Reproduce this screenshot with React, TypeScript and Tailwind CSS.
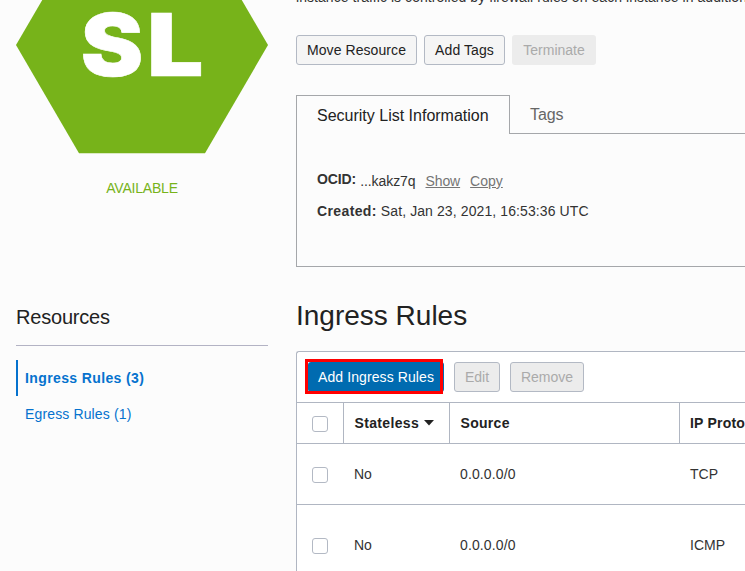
import React from 'react';

const rules = [
  { stateless: 'No', source: '0.0.0.0/0', protocol: 'TCP', height: 'h-[61px]' },
  { stateless: 'No', source: '0.0.0.0/0', protocol: 'ICMP', height: 'h-[81px]' },
];

function Checkbox() {
  return <span className="block size-4 rounded-[3px] border border-[#b3b9c4] bg-white" />;
}

function Sidebar() {
  return (
    <aside className="w-[252px] shrink-0">
      <svg className="block" width="252" height="154" viewBox="0 0 252 154">
        <polygon points="0,45 63,-63 189,-63 252,45 189,153.3 63,153.3" fill="#77b31a" />
        <text x="64.7" y="75.8" fontFamily="Inter, sans-serif" fontWeight="900" fontSize="86" fill="#fff" stroke="#fff" strokeWidth="0.6" textLength="62.5" lengthAdjust="spacingAndGlyphs">S</text>
        <text x="131" y="75.8" fontFamily="Inter, sans-serif" fontWeight="900" fontSize="86" fill="#fff" stroke="#fff" strokeWidth="0.6" textLength="56.5" lengthAdjust="spacingAndGlyphs">L</text>
      </svg>
      <div className="mt-6 h-5 text-center text-sm leading-5 tracking-[-0.2px] text-[#77b31a]">AVAILABLE</div>
      <h2 className="mt-[105px] h-[43px] border-b border-[#b3b3c4] text-[20px] leading-7 tracking-[-0.2px] text-[#222]">Resources</h2>
      <nav className="mt-[14px]">
        <div className="flex h-9 items-center border-l-2 border-[#0572ce] pl-[7px] text-sm font-bold tracking-[0.38px] text-[#0572ce]">Ingress Rules (3)</div>
        <div className="flex h-9 items-center pl-[9px] text-sm tracking-[0.14px] text-[#0572ce]">Egress Rules (1)</div>
      </nav>
    </aside>
  );
}

function Details() {
  return (
    <section>
      <div className="flex">
        <div className="h-[39px] w-[214px] shrink-0 border border-b-0 border-[#a5a7aa] pl-5 pt-2 text-base leading-6 text-[#222]">Security List Information</div>
        <div className="h-[39px] grow border-b border-[#a5a7aa] pl-5 pt-2 text-base leading-6 tracking-[-0.1px] text-[#666]">Tags</div>
      </div>
      <div className="h-[133px] border-b border-l border-[#a5a7aa] pl-5 pt-[35px] text-sm leading-5 text-[#333]">
        <div className="flex">
          <b className="tracking-[-0.1px]">OCID:</b>
          <span className="ml-1 mt-0.5 tracking-[-0.08px]">...kakz7q</span>
          <span className="ml-[10px] mt-0.5 tracking-[-0.1px] text-[#757575] underline">Show</span>
          <span className="ml-[10px] mt-0.5 text-[#757575] underline">Copy</span>
        </div>
        <div className="mt-[10px]"><b className="tracking-[0.38px]">Created:</b><span className="tracking-[0.1px]"> Sat, Jan 23, 2021, 16:53:36 UTC</span></div>
      </div>
    </section>
  );
}

function RulesTable() {
  return (
    <section className="mt-5 h-[260px] rounded-tl-[3px] border-l border-t border-[#b0b6c2] bg-white">
      <div className="flex h-[51px] items-center border-b border-[#b0b6c2] pl-2 text-sm">
        <div className="relative -top-px h-[35px] w-[138px] shrink-0">
          <button className="absolute left-[3px] top-[3px] h-[30px] w-[136px] rounded-[3px] bg-[#006bb0] pt-px text-center tracking-[0.1px] text-white">Add Ingress Rules</button>
          <span className="absolute inset-0 border-[3px] border-[#f00]" />
        </div>
        <button className="ml-[11px] h-[30px] w-[46px] shrink-0 rounded-[3px] border border-[#b3b9c4] bg-[#ececec] text-[#aaa]">Edit</button>
        <button className="ml-[10px] h-[30px] w-[74px] shrink-0 rounded-[3px] border border-[#b3b9c4] bg-[#ececec] text-[#aaa]">Remove</button>
      </div>
      <div className="grid h-[41px] grid-cols-[47px_106px_230px_1fr] border-b border-[#b0b6c2] text-sm font-bold text-[#222]">
        <div className="flex items-center border-r border-[#b0b6c2] pl-[15px] pt-px"><Checkbox /></div>
        <div className="flex items-center border-r border-[#b0b6c2] pl-[10.5px] tracking-[0.35px]">
          Stateless
          <svg className="ml-[5px]" width="10" height="6" viewBox="0 0 10 6"><path d="M0 0H10L5 5.5Z" fill="#222" /></svg>
        </div>
        <div className="flex items-center border-r border-[#b0b6c2] pl-[10.5px] tracking-[0.3px]">Source</div>
        <div className="flex items-center overflow-hidden whitespace-nowrap pl-[10px] tracking-[0.2px]">IP Protocol</div>
      </div>
      {rules.map((rule) => (
        <div key={rule.protocol} className={`grid grid-cols-[47px_106px_230px_1fr] items-center border-b border-[#b0b6c2] text-sm text-[#333] ${rule.height}`}>
          <div className="pl-[15px] pt-px"><Checkbox /></div>
          <div className="pl-[10px]">{rule.stateless}</div>
          <div className="pl-[10px] tracking-[0.12px]">{rule.source}</div>
          <div className="pl-[10px]">{rule.protocol}</div>
        </div>
      ))}
    </section>
  );
}

export default function App() {
  return (
    <div className="flex h-[571px] w-[745px] gap-7 overflow-hidden bg-[#fcfcfc] pl-4 font-['Liberation_Sans',Arial,sans-serif]">
      <Sidebar />
      <main className="min-w-0 grow">
        <div className="h-[35px] overflow-hidden">
          <p className="-mt-[13px] whitespace-nowrap text-sm leading-5 tracking-[0.06px] text-[#333]">instance traffic is controlled by firewall rules on each instance in addition to</p>
        </div>
        <div className="mb-[30px] flex gap-[7px] text-sm text-[#222]">
          <button className="h-[30px] w-[121px] rounded-[3px] border border-[#b3b9c4] bg-[#f5f5f5] tracking-[0.08px]">Move Resource</button>
          <button className="h-[30px] w-[81px] rounded-[3px] border border-[#b3b9c4] bg-[#f5f5f5] tracking-[0.08px]">Add Tags</button>
          <button className="h-[30px] w-[84px] rounded-[3px] bg-[#ececec] text-[#aaa]">Terminate</button>
        </div>
        <Details />
        <h1 className="mt-[34px] text-[28px] leading-[30px] text-[#222]">Ingress Rules</h1>
        <RulesTable />
      </main>
    </div>
  );
}
